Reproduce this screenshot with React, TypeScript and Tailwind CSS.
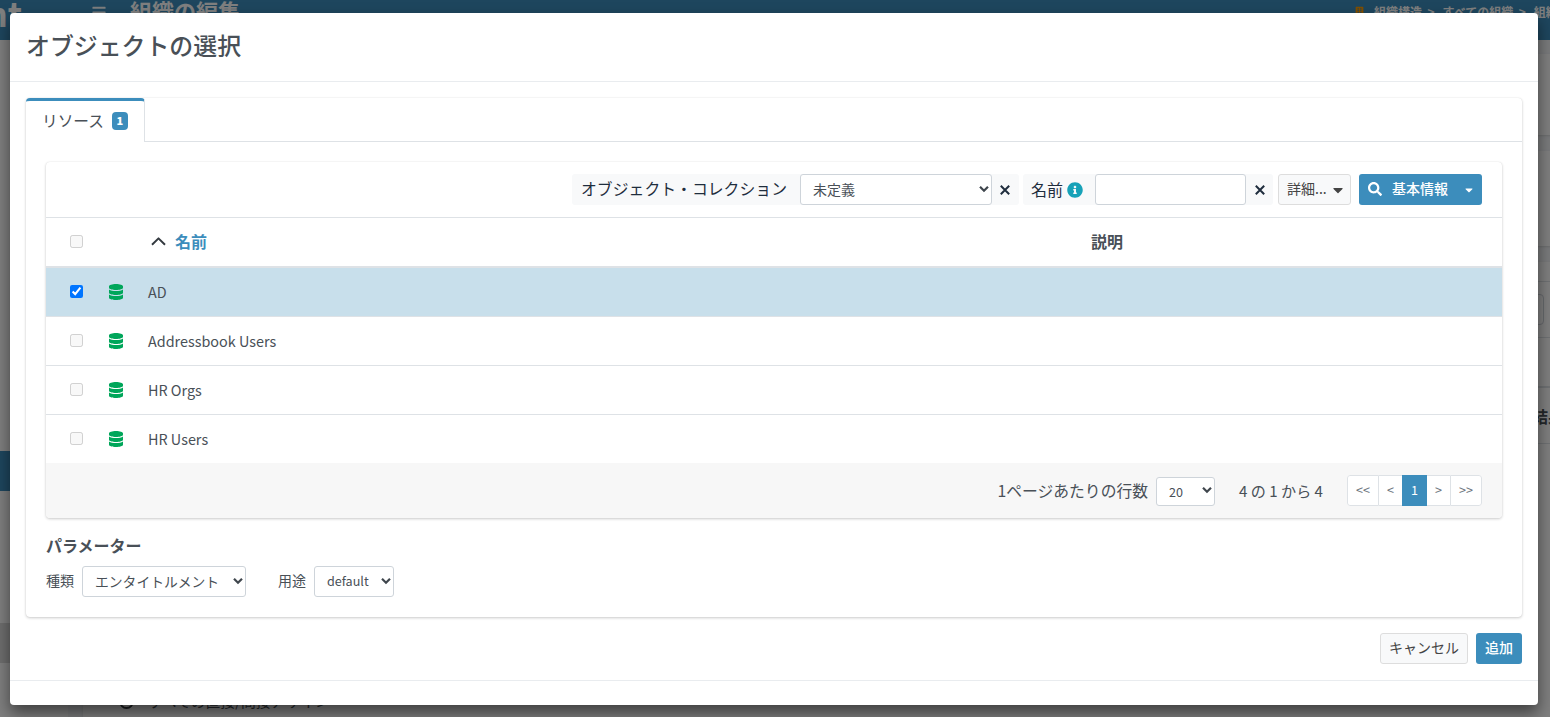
import type React from "react";
import { useState } from "react";
import clsx from "clsx";
import { FaBars, FaBuilding, FaCaretDown, FaDatabase, FaInfoCircle, FaSearch } from "react-icons/fa";

type Resource = { id: string; name: string; description?: string };

const resources: Resource[] = [
  { id: "ad", name: "AD" },
  { id: "addressbook", name: "Addressbook Users" },
  { id: "hr-orgs", name: "HR Orgs" },
  { id: "hr-users", name: "HR Users" },
];

const pages = [
  { label: "<<", width: "w-8" },
  { label: "<", width: "w-[23px]" },
  { label: "1", width: "w-[25px]" },
  { label: ">", width: "w-[23px]" },
  { label: ">>", width: "w-8" },
];

type SelectProps = {
  options: string[];
  label: string;
  className?: string;
};

function Select({ options, label, className }: SelectProps) {
  return (
    <span className={clsx("relative inline-flex h-[31px]", className)}>
      <select
        aria-label={label}
        className="h-full w-full appearance-none rounded-[3px] border border-[#ced4da] bg-white pl-3 text-[#495057] [padding-top:inherit]"
      >
        {options.map((option) => (
          <option key={option}>{option}</option>
        ))}
      </select>
      <svg className="pointer-events-none absolute right-[3px] top-[11px] h-2 w-[10px]" viewBox="0 0 10 8" fill="none" aria-hidden>
        <path d="M1 1.8 5 5.8 9 1.8" stroke="#3f464d" strokeWidth="2.2" />
      </svg>
    </span>
  );
}

function FilterItem({ label, info, children }: { label: string; info?: boolean; children: React.ReactNode }) {
  return (
    <div className="flex h-[31px] items-center rounded-[3px] bg-[#f8f9fa] text-[#1f2d3d]">
      <span className={clsx("flex items-center whitespace-nowrap", info ? "pl-2 text-[16px]" : "pl-[9px] text-[15.85px]")}>
        <span className="-mt-0.5">{label}</span>
        {info && <FaInfoCircle className="ml-1 h-4 w-4 text-[#17a2b8]" />}
      </span>
      {children}
      <button type="button" className="flex h-full w-[27px] items-center justify-center" aria-label="クリア">
        <svg className="mt-px h-[10px] w-[10px]" viewBox="0 0 10 10" fill="none" aria-hidden>
          <path d="M.8.8 9.2 9.2M9.2.8.8 9.2" stroke="currentColor" strokeWidth="2" />
        </svg>
      </button>
    </div>
  );
}

function BackgroundPage() {
  return (
    <div className="flex h-full w-[1620px] flex-col bg-[#f4f6f9]" aria-hidden>
      <header className="flex h-10 shrink-0 bg-[#3c8dbc] text-white">
        <span className="w-[91px] text-[34px] font-bold leading-[26px]">
          <span className="-ml-[14px]">nt</span>
        </span>
        <FaBars className="mt-[5px] h-[15px] w-4" />
        <span className="ml-[23px] text-[22px] font-bold leading-[20px]">組織の編集</span>
        <span className="ml-auto flex w-[265px] items-start gap-2 whitespace-nowrap pt-[5px] text-[12px] font-bold leading-[14px]">
          <FaBuilding className="mr-0.5 mt-px h-3 w-[9px] text-[#ff9c00]" />
          <span>組織構造&nbsp; &gt;</span>
          <span>すべての組織&nbsp; &gt;</span>
          <span>組織の編集</span>
        </span>
      </header>
      <div className="flex min-h-0 flex-1">
        <aside className="w-[68px] shrink-0 bg-white">
          <div className="mt-[411px] h-10 bg-[#3c8dbc]" />
          <div className="mt-[132px] h-10 bg-[#dcdcdc]" />
        </aside>
        <main className="flex flex-1 flex-col gap-4 px-[15px] pt-[14px]">
          <div className="h-[81px] shrink-0 rounded bg-white shadow" />
          <div className="h-[95px] shrink-0 rounded bg-white shadow" />
          <div className="flex-1 bg-white shadow">
            <div className="h-5 border-b border-[#dee2e6]" />
            <div className="flex h-14 items-center border-b border-[#dee2e6]">
              <span className="h-[31px] w-[1461px] rounded border border-[#ced4da]" />
            </div>
            <div className="h-[50px] border-b-2 border-[#dee2e6]" />
            <div className="flex h-[56px] items-center border-b border-[#dee2e6] pl-[1449px] text-[16px] font-bold">結果</div>
            <div className="flex items-center gap-[14px] whitespace-nowrap pl-9 pt-[245px] text-[14.8px] leading-6">
              <span className="h-[15px] w-[15px] rounded-full border-2 border-[#343a40]" />
              すべての直接/間接アサイン
            </div>
          </div>
        </main>
      </div>
    </div>
  );
}

export default function App() {
  const [selected, setSelected] = useState<string[]>(["ad"]);

  const toggle = (id: string) =>
    setSelected((current) => (current.includes(id) ? current.filter((item) => item !== id) : [...current, id]));

  return (
    <div className="relative h-[717px] w-[1550px] overflow-hidden font-['Noto_Sans_CJK_JP',sans-serif] text-[#495057]">
      <BackgroundPage />
      <div className="absolute inset-0 bg-black/50 pl-[10px] pt-[13px]">
        <div
          role="dialog"
          aria-label="オブジェクトの選択"
          className="flex h-[692px] w-[1528px] flex-col rounded bg-white shadow-[0_8px_16px_rgba(0,0,0,0.5)]"
        >
          <div className="h-[69px] border-b border-[#e9ecef] pl-4 pt-[14px]">
            <h4 className="text-[23.9px] font-medium leading-9">オブジェクトの選択</h4>
          </div>

          <div className="px-4 pt-4">
            <div className="h-[519px] rounded shadow-[0_0_1px_rgba(0,0,0,0.125),0_1px_3px_rgba(0,0,0,0.2)]">
              <div className="flex h-11 border-b border-[#dee2e6]">
                <button
                  type="button"
                  className="flex h-11 w-[119px] items-center rounded-t border-r border-t-[3px] border-r-[#dee2e6] border-t-[#3c8dbc] bg-white pb-0.5 pl-4 text-[15.7px]"
                >
                  リソース
                  <span className="ml-2 flex h-[18px] w-4 items-center justify-center rounded bg-[#3c8dbc] text-[11px] font-black leading-none text-white">
                    {selected.length}
                  </span>
                </button>
              </div>

              <div className="px-5 pt-5">
                <div className="overflow-hidden rounded shadow-[0_0_1px_rgba(0,0,0,0.125),0_1px_3px_rgba(0,0,0,0.2)]">
                  <div className="flex h-14 items-center justify-end border-b border-[#dee2e6] pr-5">
                    <FilterItem label="オブジェクト・コレクション">
                      <Select label="オブジェクト・コレクション" options={["未定義"]} className="ml-[13px] w-[192px] text-[14px]" />
                    </FilterItem>
                    <span className="w-1" />
                    <FilterItem label="名前" info>
                      <input
                        aria-label="名前"
                        className="ml-3 h-[31px] w-[151px] rounded-[3px] border border-[#ced4da] bg-white px-2 text-sm"
                      />
                    </FilterItem>
                    <button
                      type="button"
                      className="ml-[5px] flex h-[31px] w-[73px] items-center justify-between rounded-[3px] border border-[#ddd] bg-[#f8f9fa] pl-2 pr-[7px] text-[14px] text-[#444]"
                    >
                      <span className="-mt-0.5">詳細...</span>
                      <FaCaretDown className="h-4 w-[10px]" preserveAspectRatio="none" />
                    </button>
                    <button
                      type="button"
                      className="ml-2 flex h-[31px] w-[123px] items-center rounded-[3px] bg-[#3c8dbc] pl-[9px] text-[14px] font-medium text-white"
                    >
                      <FaSearch className="-mt-0.5 h-[14px] w-[14px]" />
                      <span className="-mt-0.5 ml-[10px]">基本情報</span>
                      <FaCaretDown className="ml-[15px] h-3 w-3" />
                    </button>
                  </div>

                  <table className="w-full table-fixed border-collapse text-left">
                    <colgroup>
                      <col className="w-[50px]" />
                      <col className="w-10" />
                      <col className="w-[943px]" />
                      <col />
                    </colgroup>
                    <thead>
                      <tr className="h-[49px] border-b-2 border-[#dee2e6] text-[16px]">
                        <th className="pb-0.5 pl-6">
                          <input type="checkbox" disabled className="block h-[13px] w-[13px]" aria-label="すべて選択" />
                        </th>
                        <th />
                        <th className="pb-0.5 pl-[15px]">
                          <span className="flex items-center gap-[9px] text-[#3c8dbc]">
                            <svg className="h-[9px] w-[15px]" viewBox="0 0 15 9" fill="none" aria-hidden>
                              <path d="M1 7.8 7.5 1.4 14 7.8" stroke="#343a40" strokeWidth="2" strokeLinejoin="round" />
                            </svg>
                            名前
                          </span>
                        </th>
                        <th className="pb-0.5 pl-3">説明</th>
                      </tr>
                    </thead>
                    <tbody>
                      {resources.map((resource) => {
                        const checked = selected.includes(resource.id);
                        return (
                          <tr
                            key={resource.id}
                            className={clsx("h-[49px] border-b border-[#dee2e6] last:border-b-0", checked && "bg-[#c8dfeb]")}
                          >
                            <td className="pl-6">
                              <input
                                type="checkbox"
                                checked={checked}
                                disabled={!checked}
                                onChange={() => toggle(resource.id)}
                                className="block h-[13px] w-[13px]"
                                aria-label={resource.name}
                              />
                            </td>
                            <td className="pl-[13px]">
                              <FaDatabase className="h-4 w-[14px] text-[#00a65a]" />
                            </td>
                            <td className="pl-3 text-[14.4px]">{resource.name}</td>
                            <td className="pl-3">{resource.description}</td>
                          </tr>
                        );
                      })}
                    </tbody>
                  </table>

                  <div className="flex h-[55px] items-center justify-end bg-[#f7f7f7] pr-5 text-[15.8px]">
                    <span>1ページあたりの行数</span>
                    <Select label="1ページあたりの行数" options={["20"]} className="ml-2 w-[59px] pt-0.5 text-[12.6px]" />
                    <span className="ml-6 text-[15.1px]">4 の 1 から 4</span>
                    <div className="ml-6 flex h-[31px] overflow-hidden rounded-[3px]">
                      {pages.map((page) => (
                        <button
                          key={page.label}
                          type="button"
                          className={clsx(
                            "h-full border-y text-[12.6px]",
                            page.width,
                            page.label === "1"
                              ? "border-[#3c8dbc] bg-[#3c8dbc] text-white"
                              : "border-[#dee2e6] bg-white text-[#6c757d]",
                            page.label === "<<" && "rounded-l-[3px] border-x",
                            page.label === ">>" && "rounded-r-[3px] border-x",
                          )}
                        >
                          {page.label}
                        </button>
                      ))}
                    </div>
                  </div>
                </div>

                <h3 className="mt-[15px] text-[16px] font-bold leading-6">パラメーター</h3>
                <div className="mt-[9px] flex items-center text-[14px]">
                  <span className="-mt-0.5">種類</span>
                  <Select label="種類" options={["エンタイトルメント"]} className="ml-2 w-[164px] text-[13.8px]" />
                  <span className="-mt-0.5 ml-8">用途</span>
                  <Select label="用途" options={["default"]} className="ml-2 w-20 text-[12.6px]" />
                </div>
              </div>
            </div>
          </div>

          <div className="mt-4 flex h-[48px] items-start justify-end gap-2 border-b border-[#e9ecef] pr-4 text-[14px]">
            <button type="button" className="h-[31px] w-[88px] rounded-[3px] border border-[#ddd] bg-[#f8f9fa] pb-0.5 text-[#444]">
              キャンセル
            </button>
            <button type="button" className="h-[31px] w-[46px] rounded-[3px] bg-[#3c8dbc] pb-0.5 font-medium text-white">
              追加
            </button>
          </div>
        </div>
      </div>
    </div>
  );
}
